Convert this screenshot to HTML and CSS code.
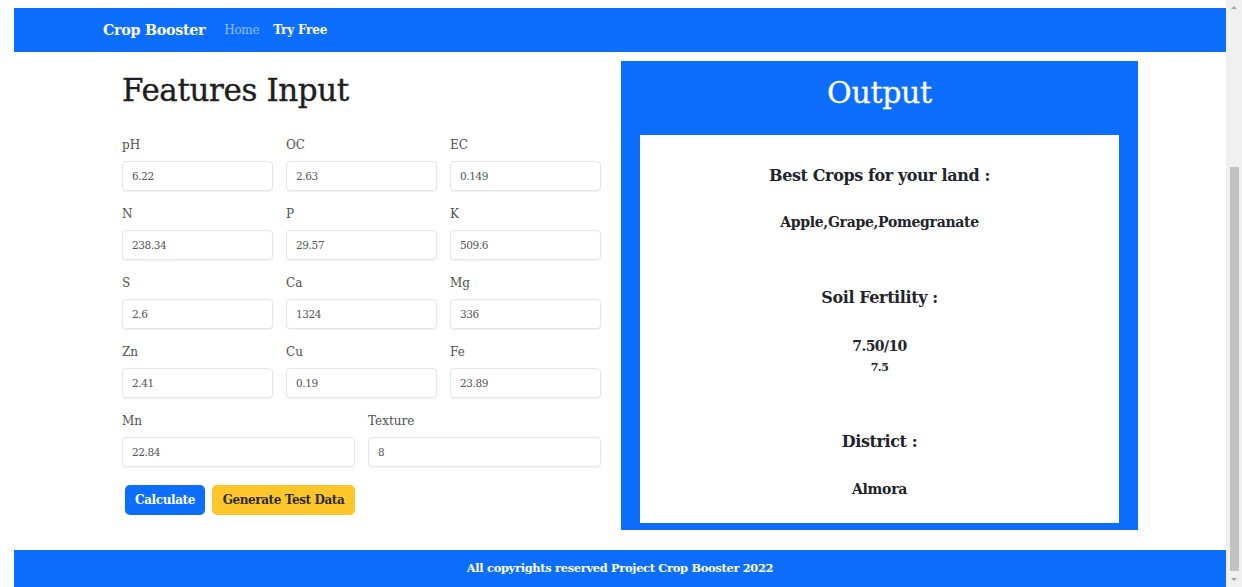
FILE: index.html
```html
<!DOCTYPE html>
<html lang="en">
<head>
<meta charset="utf-8">
<title>Crop Booster</title>
<link rel="stylesheet" href="styles.css">
</head>
<body>
<div class="app">
  <div class="page">
    <nav class="navbar">
      <a class="brand" href="#">Crop Booster</a>
      <a class="nav-link muted" href="#">Home</a>
      <a class="nav-link" href="#">Try Free</a>
    </nav>
    <main class="content">
      <section class="features">
        <h1 class="features-title">Features Input</h1>
        <div class="grid3">
          <div class="field"><label>pH</label><input type="text" value="6.22"></div>
          <div class="field"><label>OC</label><input type="text" value="2.63"></div>
          <div class="field"><label>EC</label><input type="text" value="0.149"></div>
          <div class="field"><label>N</label><input type="text" value="238.34"></div>
          <div class="field"><label>P</label><input type="text" value="29.57"></div>
          <div class="field"><label>K</label><input type="text" value="509.6"></div>
          <div class="field"><label>S</label><input type="text" value="2.6"></div>
          <div class="field"><label>Ca</label><input type="text" value="1324"></div>
          <div class="field"><label>Mg</label><input type="text" value="336"></div>
          <div class="field"><label>Zn</label><input type="text" value="2.41"></div>
          <div class="field"><label>Cu</label><input type="text" value="0.19"></div>
          <div class="field"><label>Fe</label><input type="text" value="23.89"></div>
        </div>
        <div class="grid2">
          <div class="field"><label>Mn</label><input type="text" value="22.84"></div>
          <div class="field"><label>Texture</label><input type="text" value="8"></div>
        </div>
        <div class="actions">
          <button class="btn btn-primary">Calculate</button>
          <button class="btn btn-warning">Generate Test Data</button>
        </div>
      </section>
      <section class="output">
        <h2 class="output-title">Output</h2>
        <div class="result">
          <h4 class="r-head r-first">Best Crops for your land :</h4>
          <h5 class="r-value r-crops">Apple,Grape,Pomegranate</h5>
          <h4 class="r-head r-soil">Soil Fertility :</h4>
          <h5 class="r-score">7.50/10</h5>
          <h6 class="r-small">7.5</h6>
          <h4 class="r-head r-district">District :</h4>
          <h5 class="r-value r-almora">Almora</h5>
        </div>
      </section>
    </main>
    <footer class="footer">All copyrights reserved Project Crop Booster 2022</footer>
  </div>
  <div class="scrollbar">
    <div class="sb-arrow sb-up"></div>
    <div class="sb-track"><div class="sb-thumb"></div></div>
    <div class="sb-arrow sb-down"></div>
  </div>
</div>
</body>
</html>
```
FILE: styles.css
```css
html, body {
  margin: 0;
  padding: 0;
  height: 100%;
  background: #ffffff;
  overflow: hidden;
}
body {
  font-family: "DejaVu Serif", "Liberation Serif", serif;
  color: #212529;
}
.app {
  display: flex;
  height: 587px;
}
.page {
  flex: 1;
  display: flex;
  flex-direction: column;
  padding: 8px 0 0 14px;
  min-width: 0;
}
.navbar {
  height: 44px;
  background: #0d6efd;
  display: flex;
  align-items: center;
  padding-left: 89px;
  flex-shrink: 0;
}
.navbar a {
  text-decoration: none;
  color: #ffffff;
}
.brand {
  font-size: 14.3px;
  font-weight: bold;
  margin-right: 19px;
  letter-spacing: -0.3px;
}
.nav-link {
  font-size: 12px;
  font-weight: bold;
  margin-right: 14px;
  letter-spacing: -0.2px;
}
.nav-link.muted {
  color: rgba(255, 255, 255, 0.55);
  font-weight: normal;
  letter-spacing: -0.3px;
}
.content {
  display: flex;
  align-items: flex-start;
  padding-left: 108px;
  flex: 1;
}
.features {
  width: 479px;
  flex-shrink: 0;
}
.features-title {
  font-size: 31px;
  font-weight: normal;
  line-height: 38px;
  margin: 19px 0 27px;
  color: #1f1f1f;
  letter-spacing: -0.4px;
  -webkit-text-stroke: 0.4px #1f1f1f;
}
.grid3 {
  display: grid;
  grid-template-columns: repeat(3, minmax(0, 1fr));
  column-gap: 13px;
  row-gap: 14px;
}
.grid2 {
  display: grid;
  grid-template-columns: repeat(2, minmax(0, 1fr));
  column-gap: 13px;
  margin-top: 14px;
}
.field {
  display: flex;
  flex-direction: column;
  min-width: 0;
}
.field label {
  font-size: 12px;
  line-height: 19px;
  margin-bottom: 6px;
  color: #505050;
}
.field input {
  box-sizing: border-box;
  width: 100%;
  height: 30px;
  border: 1px solid #e3e6ea;
  border-radius: 4px;
  padding: 0 9px;
  font-family: "DejaVu Serif", "Liberation Serif", serif;
  font-size: 10.5px;
  color: #555;
  letter-spacing: -0.4px;
  background: #fff;
  box-shadow: 0 1px 2px rgba(0, 0, 0, 0.06);
}
.actions {
  display: flex;
  gap: 7px;
  margin-top: 18px;
  padding-left: 3px;
}
.btn {
  height: 30px;
  border: none;
  border-radius: 5px;
  font-family: "DejaVu Serif", "Liberation Serif", serif;
  font-size: 12px;
  font-weight: bold;
  letter-spacing: -0.4px;
  padding: 0;
}
.btn-primary {
  background: #0d6efd;
  color: #fff;
  width: 80px;
}
.btn-warning {
  background: #ffc62b;
  color: #2b2b2b;
  width: 143px;
}
.output {
  margin-left: 20px;
  margin-top: 9px;
  width: 517px;
  height: 469px;
  box-sizing: border-box;
  background: #0d6efd;
  padding: 0 19px 7px;
  display: flex;
  flex-direction: column;
  flex-shrink: 0;
}
.output-title {
  margin: 0;
  height: 74px;
  line-height: 64px;
  text-align: center;
  color: #fff;
  font-weight: normal;
  font-size: 30px;
  letter-spacing: -0.3px;
  -webkit-text-stroke: 0.3px #fff;
}
.result {
  flex: 1;
  background: #fff;
  text-align: center;
  padding-top: 31px;
}
.result .r-head,
.result .r-value,
.result .r-score,
.result .r-small {
  margin: 0;
  color: #212529;
  font-weight: bold;
  line-height: 1.2;
}
.result .r-head {
  font-size: 16px;
  letter-spacing: -0.4px;
}
.result .r-value {
  font-size: 14px;
  letter-spacing: -0.3px;
}
.result .r-crops { margin-top: 29px; }
.result .r-soil { margin-top: 57px; }
.result .r-score {
  font-size: 14px;
  margin-top: 31px;
  letter-spacing: -0.6px;
}
.result .r-small {
  font-size: 11px;
  margin-top: 6px;
  letter-spacing: -0.5px;
}
.result .r-district { margin-top: 58px; }
.result .r-almora { margin-top: 30px; }
.footer {
  height: 37px;
  background: #0d6efd;
  color: #fff;
  text-align: center;
  font-size: 11.4px;
  font-weight: bold;
  line-height: 37px;
  letter-spacing: -0.3px;
  flex-shrink: 0;
}
.scrollbar {
  width: 16px;
  background: #f0f0f0;
  display: flex;
  flex-direction: column;
  align-items: center;
}
.sb-arrow {
  width: 0;
  height: 0;
  border-left: 3px solid transparent;
  border-right: 3px solid transparent;
  margin: 6px 0;
}
.sb-up {
  border-bottom: 3px solid #a3a3a3;
}
.sb-down {
  border-top: 3px solid #a3a3a3;
}
.sb-track {
  flex: 1;
  width: 100%;
  display: flex;
  flex-direction: column;
  justify-content: flex-end;
  align-items: center;
}
.sb-thumb {
  width: 9px;
  height: 404px;
  background: #c1c1c1;
  margin-bottom: 1px;
}
```
